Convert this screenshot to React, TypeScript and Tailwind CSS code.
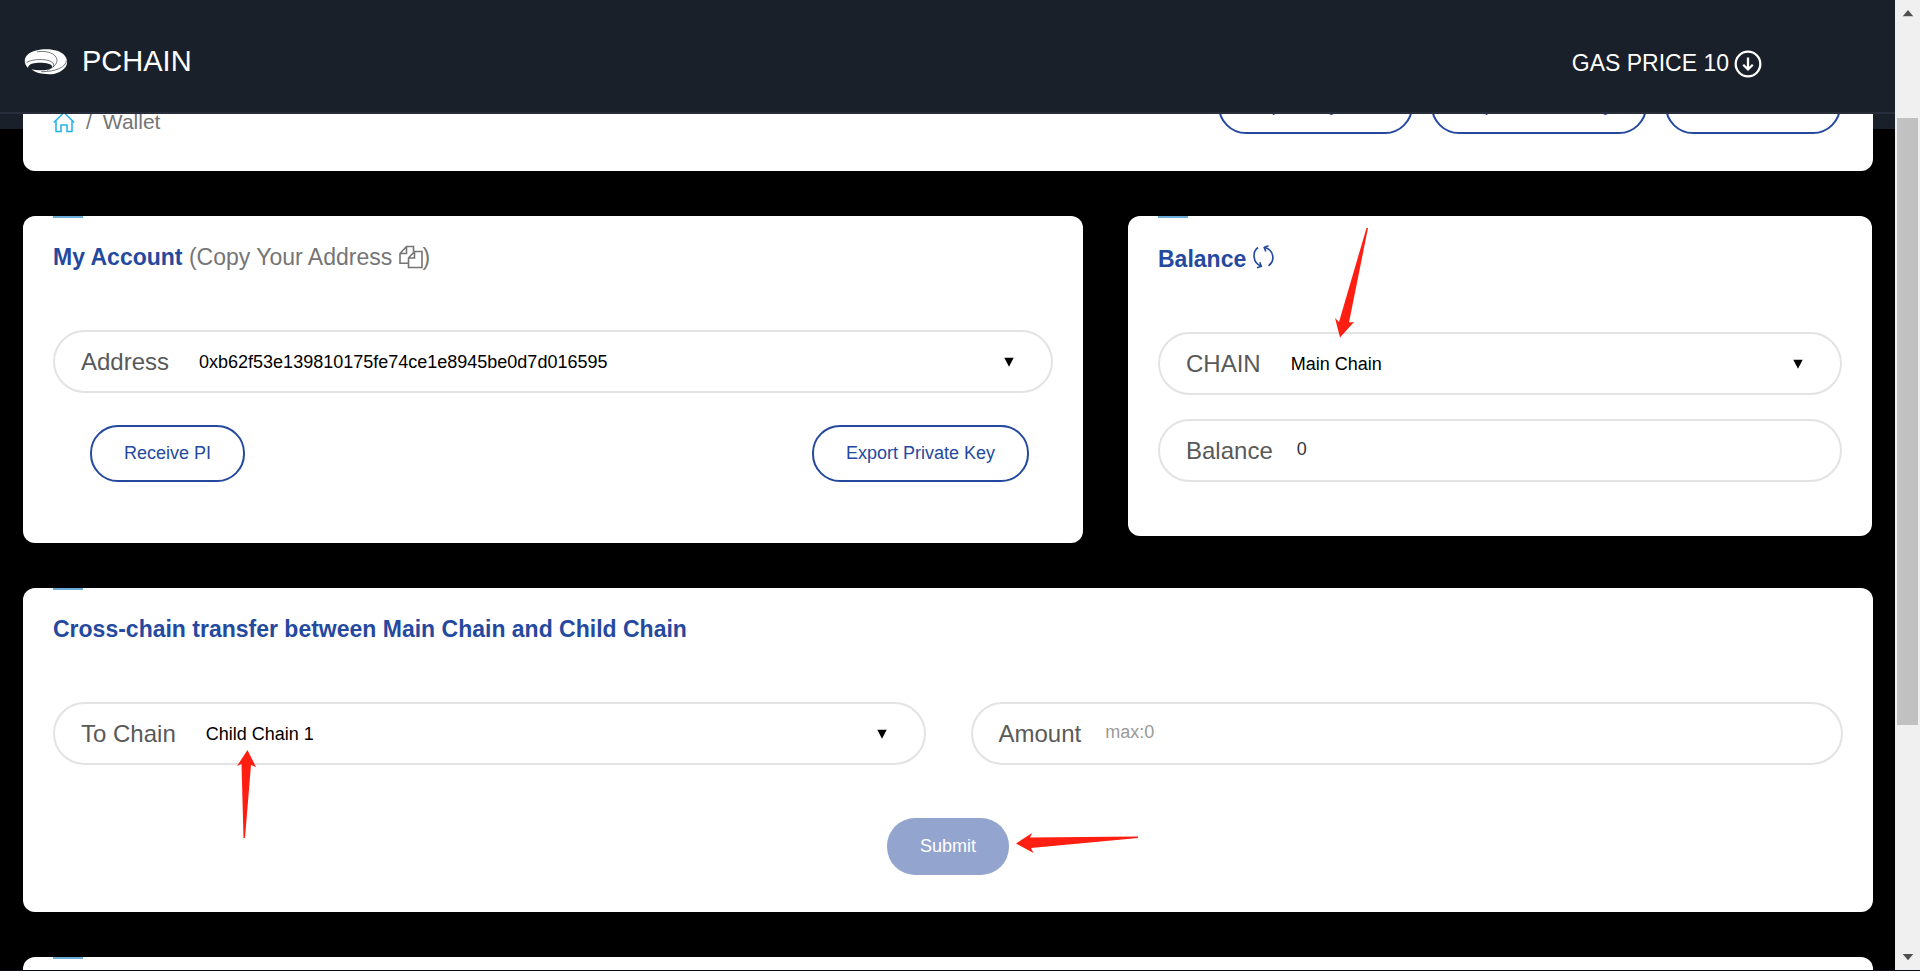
import type { ReactNode } from "react";

const pill = "flex h-[63px] items-center rounded-full border-2 border-[#e3e3e3] pl-[26px] pr-[37px]";
const outlineButton =
  "h-[57px] rounded-[28px] border-2 border-[#24499f] bg-white px-8 text-[18px] whitespace-nowrap text-[#24499f]";

function Card({ children, className = "" }: { children: ReactNode; className?: string }) {
  return (
    <section className={`rounded-xl bg-white px-[30px] ${className}`}>
      <div className="h-0.5 w-[30px] bg-[#6aaed8]" />
      {children}
    </section>
  );
}

function SelectField({ id, label, value }: { id: string; label: string; value: string }) {
  return (
    <div className={pill}>
      <label htmlFor={id} className="text-[24px] whitespace-nowrap text-[#595959]">{label}</label>
      <select id={id} defaultValue={value} className="ml-[30px] min-w-0 flex-1 appearance-none bg-transparent pt-0.5 text-[18px] text-black outline-none">
        <option>{value}</option>
      </select>
      <svg viewBox="0 0 10 10" className="pointer-events-none size-[10px]" aria-hidden="true">
        <path d="M0.300 0.800h9.400L5 9.800z" fill="#000" />
      </svg>
    </div>
  );
}

function TextField({ id, label, value, placeholder }: { id: string; label: string; value?: string; placeholder?: string }) {
  return (
    <div className={pill}>
      <label htmlFor={id} className="text-[24px] whitespace-nowrap text-[#595959]">{label}</label>
      <input
        id={id}
        defaultValue={value}
        placeholder={placeholder}
        className="ml-6 min-w-0 flex-1 bg-transparent pb-0.5 text-[18px] text-[#333] outline-none placeholder:text-[#999]"
      />
    </div>
  );
}

function Logo() {
  return (
    <svg viewBox="0 0 44 26" className="h-[26px] w-[44px]" aria-hidden="true">
      <path
        d="M4 19C-2.500 12.500 1 4 12 1.500 22-1 36 0 41 7c5 7 1 15-11 18C21 26 11 24 7.500 20.300 14 21.800 24 22 28 18.500 29.500 15 20 13.200 12 14 7 14.500 4.300 16 4 19z"
        fill="#fff"
      />
      <path
        d="M2.500 13.500C6 11.300 13 10 20 10.700c6 .6 11 2.800 9.500 7M13 2.800c8-1.300 16 .7 19 5.200 3 5-1 10-9 13.300M42.500 11.500C42 18 32 22.800 17 22.700"
        fill="none"
        stroke="#1a202a"
        strokeWidth="0.6"
      />
    </svg>
  );
}

function HomeIcon() {
  return (
    <svg viewBox="0 0 22 22" className="size-[22px]" fill="none" stroke="#1eb2ea" strokeWidth="1.500" aria-hidden="true">
      <path d="M0.800 11.500 11 1.500l10.200 10M3 9.800V20.500h5V14h6v6.500h5V9.800" />
    </svg>
  );
}

function CopyIcon() {
  return (
    <svg viewBox="0 0 24 24" className="inline-block size-6 align-[-4px]" fill="none" stroke="#757575" strokeWidth="1.600" aria-hidden="true">
      <path d="M9 18.200H1V8.500L7.500 1.500H14.500V6.500M7.500 1.500V8.500H1" />
      <path d="M9.500 13 15.500 6.500H23V22.500H9.500zM15.500 6.500V13H9.500" />
    </svg>
  );
}

function RefreshIcon() {
  return (
    <svg viewBox="0 0 22 24" className="inline-block h-6 w-[22px] align-[-2px]" fill="none" stroke="#24499f" strokeWidth="1.600" aria-hidden="true">
      <path d="M5 2.500C-0.800 6.500-0.500 18 8 21" />
      <path d="M4 22.800 8.300 21.200 6.800 17.200" />
      <path d="M15.500 20.800C22.800 15.500 20.500 4.500 11.500 2.500" />
      <path d="M15.500 0.800 11.200 2.400 12.800 6.500" />
    </svg>
  );
}

function DownCircleIcon() {
  return (
    <svg viewBox="0 0 28 28" className="mt-0.5 size-7" fill="none" stroke="#fff" strokeWidth="2.300" aria-hidden="true">
      <circle cx="14" cy="14" r="12.300" />
      <path d="M14 7.500V19.500M9.200 14.800 14 19.500l4.800-4.700" />
    </svg>
  );
}

function Arrow({ className, viewBox, points }: { className: string; viewBox: string; points: string }) {
  return (
    <svg viewBox={viewBox} className={`pointer-events-none absolute ${className}`} aria-hidden="true">
      <polygon points={points} fill="#ff1f12" />
    </svg>
  );
}

export default function App() {
  return (
    <div className="flex h-screen flex-col overflow-hidden bg-black font-['Liberation_Sans',Arial,sans-serif]">
      <div className="flex min-h-0 flex-1">
        <div className="flex min-w-0 flex-1 flex-col overflow-hidden">
          <header className="relative z-10 flex h-[114px] shrink-0 items-center justify-between border-b-2 border-[#272d3b] bg-[#1a202a] pt-3 pr-[133px] pl-6 text-white">
            <a href="#home" className="flex items-center gap-[14px] text-[29px]">
              <Logo />
              <span>PCHAIN</span>
            </a>
            <button type="button" className="flex items-center gap-[5px] pt-0.5 text-[23px]">
              GAS PRICE 10
              <DownCircleIcon />
            </button>
          </header>

          <div className="bg-linear-to-b from-[#1a202a] from-[15px] to-black to-[15px] pr-[22px] pl-[23px]">
            <div className="-mt-[70px] flex h-[127px] items-start justify-between rounded-b-xl bg-white pt-[33px] pr-8 pl-[30px]">
              <nav aria-label="Breadcrumb" className="flex h-[57px] items-center gap-[11px] pt-8 text-[21px] text-[#757575]">
                <a href="#home" aria-label="Home"><HomeIcon /></a>
                <span>/</span>
                <span>Wallet</span>
              </nav>
              <div className="flex gap-[18px]">
                <button type="button" className={outlineButton}>Import Keystore</button>
                <button type="button" className={outlineButton}>Import Private Key</button>
                <button type="button" className={outlineButton}>Create Wallet</button>
              </div>
            </div>
          </div>

          <main className="flex flex-col gap-[45px] pt-[45px] pr-[22px] pl-[23px]">
            <div className="grid grid-cols-[1060fr_744fr] items-start gap-[45px] pr-px">
              <Card className="pb-[61px]">
                <h2 className="mt-6 h-8 text-[23px] leading-[30px] text-[#757575]">
                  <strong className="text-[#24499f]">My Account</strong> (Copy Your Address{" "}
                  <button type="button" aria-label="Copy address"><CopyIcon /></button>)
                </h2>
                <div className="mt-14">
                  <SelectField id="address" label="Address" value="0xb62f53e139810175fe74ce1e8945be0d7d016595" />
                </div>
                <div className="mt-8 flex justify-between pr-6 pl-[37px]">
                  <button type="button" className={outlineButton}>Receive PI</button>
                  <button type="button" className={outlineButton}>Export Private Key</button>
                </div>
              </Card>

              <Card className="relative pb-[54px]">
                <h2 className="mt-[26px] h-8 text-[23px] leading-[30px] font-bold text-[#24499f]">
                  Balance <button type="button" aria-label="Refresh balance"><RefreshIcon /></button>
                </h2>
                <div className="mt-14 flex flex-col gap-6">
                  <SelectField id="chain" label="CHAIN" value="Main Chain" />
                  <TextField id="balance" label="Balance" value="0" />
                </div>
                <Arrow
                  className="top-3 left-[207px] h-[110px] w-[34px]"
                  viewBox="0 0 34 110"
                  points="31.500,0 33,0 14,94.500 19,94 5,109.500 0,90 4,94"
                />
              </Card>
            </div>

            <Card className="relative pb-[37px]">
              <h2 className="mt-6 h-8 text-[23px] leading-[30px] font-bold text-[#24499f]">
                Cross-chain transfer between Main Chain and Child Chain
              </h2>
              <div className="mt-14 grid grid-cols-2 gap-[45px]">
                <SelectField id="to-chain" label="To Chain" value="Child Chain 1" />
                <TextField id="amount" label="Amount" placeholder="max:0" />
              </div>
              <div className="mt-[53px] flex justify-center">
                <div className="relative">
                  <button type="button" className="h-[57px] w-[122px] rounded-[28px] bg-[#93a5cf] text-[18px] text-white">Submit</button>
                  <Arrow
                    className="top-[15px] left-[129px] h-5 w-[122px]"
                    viewBox="0 0 122 20"
                    points="0,10.500 16,0 14,4.500 122,3.500 122,5 15,15 17.500,20"
                  />
                </div>
              </div>
              <Arrow
                className="top-[162px] left-[214px] h-[88px] w-[19px]"
                viewBox="0 0 19 88"
                points="10.500,0 19,17 14,15 8,88 6.500,88 4.500,14 0,16"
              />
            </Card>

            <Card className="h-40">{null}</Card>
          </main>
        </div>

        <div className="flex w-[25px] shrink-0 flex-col items-center bg-[#f0f0f0] pt-[10px] pb-[9px]" aria-hidden="true">
          <svg viewBox="0 0 12 8" className="h-[7px] w-3"><path d="M0 7 6 0l6 7z" fill="#505050" /></svg>
          <div className="mt-[101px] h-[607px] w-[21px] bg-[#c1c1c1]" />
          <svg viewBox="0 0 12 8" className="mt-auto h-[7px] w-3"><path d="M0 0h12L6 7z" fill="#505050" /></svg>
        </div>
      </div>
      <div className="h-px shrink-0 bg-[#060d1a]" />
    </div>
  );
}
